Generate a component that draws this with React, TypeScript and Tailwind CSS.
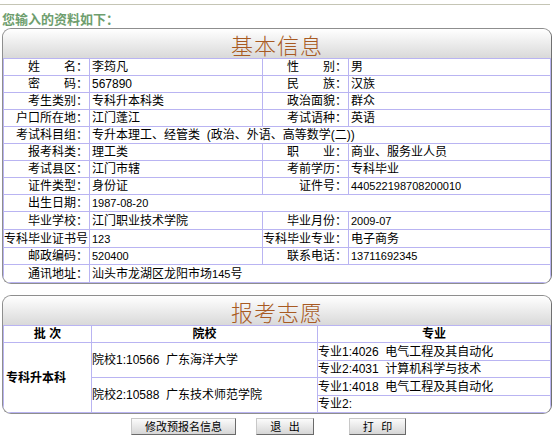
import React from "react";

const font = { fontFamily: '"Liberation Sans", "Noto Sans CJK SC", sans-serif' };

const L = "h-[17px] border border-[#b9b4f2] text-right pr-[1px] whitespace-nowrap align-middle leading-none";
const V = "h-[17px] border border-[#b9b4f2] text-left pl-[2px] whitespace-nowrap align-middle leading-none";

function Header({ title }: { title: string }) {
  return (
    <div className="h-[29px] flex items-center justify-center bg-gradient-to-b from-white to-[#d9d9d9] rounded-t-[9px]">
      <span
        className="text-[22px] leading-none text-[#a85a22] font-light tracking-[1px]"
        style={{ fontFamily: '"Noto Sans CJK SC", sans-serif' }}
      >
        {title}
      </span>
    </div>
  );
}

function Btn({ children, w }: { children: React.ReactNode; w: string }) {
  return (
    <div
      className={`${w} h-[17px] flex items-center justify-center text-[11px] leading-none text-black bg-gradient-to-b from-[#fbfbfb] to-[#d6d6d6] border border-t-[#c8c8c8] border-l-[#c8c8c8] border-r-[#6a6a6a] border-b-[#6a6a6a]`}
    >
      {children}
    </div>
  );
}

export default function App() {
  return (
    <div className="w-[554px] h-[444px] bg-white text-black text-[12px] relative overflow-hidden" style={font}>
      <div className="pt-[4px]">
        <div className="h-[1px] w-[550px] bg-[#c5c5b5]" />
      </div>
      <div
        className="pl-[2px] pt-[7px] h-[23px] text-[13px] leading-[14px] font-bold text-[#6e9e6e]"
        style={{ fontFamily: '"Noto Sans CJK SC", sans-serif' }}
      >
        您输入的资料如下：
      </div>

      {/* Panel 1 */}
      <div className="ml-[2px] w-[550px] border border-[#8e8e8e] border-r-[#707070] rounded-[9px] overflow-hidden">
        <Header title="基本信息" />
        <table className="w-full table-fixed border-collapse">
          <colgroup>
            <col className="w-[86px]" />
            <col className="w-[173px]" />
            <col className="w-[86px]" />
            <col />
          </colgroup>
          <tbody>
            <tr>
              <td className={L}>姓　　名：</td>
              <td className={V}>李筠凡</td>
              <td className={L}>性　　别：</td>
              <td className={V}>男</td>
            </tr>
            <tr>
              <td className={L}>密　　码：</td>
              <td className={V}>567890</td>
              <td className={L}>民　　族：</td>
              <td className={V}>汉族</td>
            </tr>
            <tr>
              <td className={L}>考生类别：</td>
              <td className={V}>专科升本科类</td>
              <td className={L}>政治面貌：</td>
              <td className={V}>群众</td>
            </tr>
            <tr>
              <td className={L}>户口所在地：</td>
              <td className={V}>江门蓬江</td>
              <td className={L}>考试语种：</td>
              <td className={V}>英语</td>
            </tr>
            <tr>
              <td className={L}>考试科目组：</td>
              <td className={V} colSpan={3}>
                专升本理工、经管类&nbsp; (政治、外语、高等数学(二))
              </td>
            </tr>
            <tr>
              <td className={L}>报考科类：</td>
              <td className={V}>理工类</td>
              <td className={L}>职　　业：</td>
              <td className={V}>商业、服务业人员</td>
            </tr>
            <tr>
              <td className={L}>考试县区：</td>
              <td className={V}>江门市辖</td>
              <td className={L}>考前学历：</td>
              <td className={V}>专科毕业</td>
            </tr>
            <tr>
              <td className={L}>证件类型：</td>
              <td className={V}>身份证</td>
              <td className={L}>证件号：</td>
              <td className={V}>
                <span className="text-[11px]">440522198708200010</span>
              </td>
            </tr>
            <tr>
              <td className={L}>出生日期：</td>
              <td className={V} colSpan={3}>
                <span className="text-[11px]">1987-08-20</span>
              </td>
            </tr>
            <tr>
              <td className={`${L} h-[18px]`}>毕业学校：</td>
              <td className={V}>江门职业技术学院</td>
              <td className={L}>毕业月份：</td>
              <td className={V}>
                <span className="text-[11px]">2009-07</span>
              </td>
            </tr>
            <tr>
              <td className={`${L} h-[18px]`}>专科毕业证书号</td>
              <td className={V}>
                <span className="text-[11px]">123</span>
              </td>
              <td className={L}>专科毕业专业：</td>
              <td className={V}>电子商务</td>
            </tr>
            <tr>
              <td className={L}>邮政编码：</td>
              <td className={V}>
                <span className="text-[11px]">520400</span>
              </td>
              <td className={L}>联系电话：</td>
              <td className={V}>
                <span className="text-[11px]">13711692345</span>
              </td>
            </tr>
            <tr>
              <td className={`${L} h-[18px]`}>通讯地址：</td>
              <td className={V} colSpan={3}>
                汕头市龙湖区龙阳市场<span className="text-[11px]">145</span>号
              </td>
            </tr>
          </tbody>
        </table>
      </div>

      {/* Panel 2 */}
      <div className="mt-[11px] ml-[2px] w-[550px] border border-[#8e8e8e] border-r-[#707070] rounded-[9px] overflow-hidden">
        <Header title="报考志愿" />
        <table className="w-full table-fixed border-collapse">
          <colgroup>
            <col className="w-[88px]" />
            <col className="w-[226px]" />
            <col />
          </colgroup>
          <tbody>
            <tr>
              <td className="h-[17px] border border-[#b9b4f2] text-center font-bold leading-none">批 次</td>
              <td className="h-[17px] border border-[#b9b4f2] text-center font-bold leading-none">院校</td>
              <td className="h-[17px] border border-[#b9b4f2] text-center font-bold leading-none">专业</td>
            </tr>
            <tr>
              <td rowSpan={4} className="border border-[#b9b4f2] text-left pl-[2px] font-bold leading-none">
                专科升本科
              </td>
              <td rowSpan={2} className="border border-[#b9b4f2] text-left pl-0 leading-none whitespace-nowrap">
                院校1:10566&nbsp; 广东海洋大学
              </td>
              <td className="h-[18px] border border-[#b9b4f2] text-left leading-none whitespace-nowrap">
                专业1:4026&nbsp; 电气工程及其自动化
              </td>
            </tr>
            <tr>
              <td className="h-[17px] border border-[#b9b4f2] text-left leading-none whitespace-nowrap">
                专业2:4031&nbsp; 计算机科学与技术
              </td>
            </tr>
            <tr>
              <td rowSpan={2} className="border border-[#b9b4f2] text-left pl-0 leading-none whitespace-nowrap">
                院校2:10588&nbsp; 广东技术师范学院
              </td>
              <td className="h-[18px] border border-[#b9b4f2] text-left leading-none whitespace-nowrap">
                专业1:4018&nbsp; 电气工程及其自动化
              </td>
            </tr>
            <tr>
              <td className="h-[17px] border border-[#b9b4f2] text-left leading-none whitespace-nowrap">专业2:</td>
            </tr>
          </tbody>
        </table>
      </div>

      {/* Buttons */}
      <div className="flex pl-[131px] mt-[4px]" style={{ fontFamily: '"Noto Sans CJK SC", sans-serif' }}>
        <Btn w="w-[105px]">修改预报名信息</Btn>
        <div className="ml-[20px]">
          <Btn w="w-[58px]">退&nbsp;&nbsp; 出</Btn>
        </div>
        <div className="ml-[35px]">
          <Btn w="w-[57px]">打&nbsp;&nbsp; 印</Btn>
        </div>
      </div>
    </div>
  );
}
